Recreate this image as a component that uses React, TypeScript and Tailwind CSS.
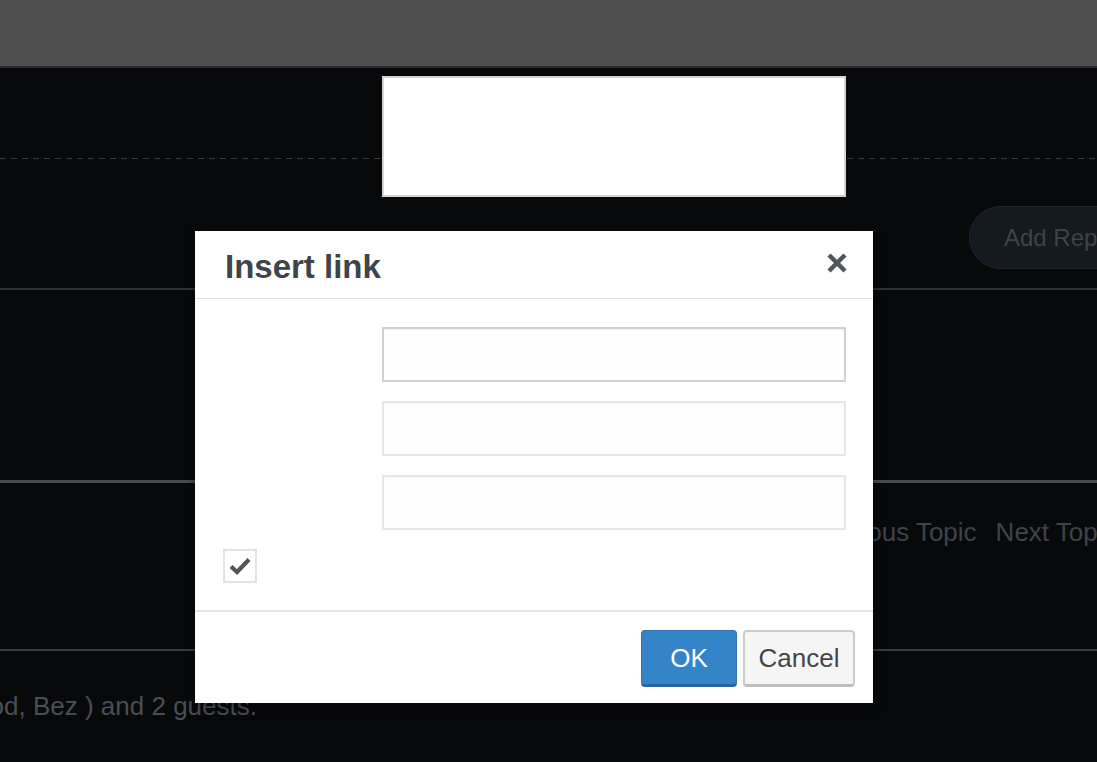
import React from 'react';

const FONT = { fontFamily: '"Liberation Sans", Arial, Helvetica, sans-serif' };

function CloseIcon() {
  return (
    <svg width="22" height="22" viewBox="0 0 22 22" className="block">
      <path d="M3 3 L19 19 M19 3 L3 19" stroke="#50565c" strokeWidth="4.5" strokeLinecap="butt" />
    </svg>
  );
}

function CheckIcon() {
  return (
    <svg width="22" height="18" viewBox="0 0 22 18" className="block">
      <path d="M2 9.5 L8 15 L20 2.5" fill="none" stroke="#555" strokeWidth="4.2" strokeLinejoin="miter" />
    </svg>
  );
}

function LinkDialog() {
  return (
    <div className="absolute left-[195px] top-[231px] w-[678px] h-[472px] bg-white flex flex-col shadow-[0_3px_12px_rgba(0,0,0,0.4)]">
      <div className="h-[68px] border-b border-[#e3e3e3] flex items-center justify-between pl-[30px] pr-[25px]">
        <h2 className="text-[33px] font-bold text-[#3e444a] leading-none pt-[3px]">Insert link</h2>
        <button type="button" className="p-0 pb-[3px]">
          <CloseIcon />
        </button>
      </div>

      <div className="flex-1 pl-[28px] pr-[27px] pt-[28px] flex flex-col">
        <div className="flex flex-col gap-[19px] pl-[159px]">
          <input
            type="text"
            className="h-[55px] w-full border-2 border-[#d0d0d0] bg-[#fefefe] outline-none shadow-[inset_0_1px_2px_rgba(0,0,0,0.06)]"
          />
          <input
            type="text"
            className="h-[55px] w-full border-2 border-[#e6e6e6] bg-[#fefefe] outline-none shadow-[inset_0_1px_2px_rgba(0,0,0,0.04)]"
          />
          <input
            type="text"
            className="h-[55px] w-full border-2 border-[#e6e6e6] bg-[#fefefe] outline-none shadow-[inset_0_1px_2px_rgba(0,0,0,0.04)]"
          />
        </div>
        <div className="mt-[19px] w-[34px] h-[34px] border-2 border-[#e2e2e2] flex items-center justify-center">
          <CheckIcon />
        </div>
      </div>

      <div className="h-[93px] border-t-2 border-[#e5e5e5] flex justify-end items-start gap-[6px] pt-[18px] pr-[18px]">
        <button
          type="button"
          className="h-[57px] w-[96px] rounded-[4px] bg-[#3684c8] border border-[#2e73b3] border-b-[3px] border-b-[#2a65a0] text-white text-[26px] leading-none"
        >
          OK
        </button>
        <button
          type="button"
          className="h-[57px] w-[112px] rounded-[4px] bg-[#f5f5f5] border-2 border-[#cccccc] border-b-[3px] border-b-[#bdbdbd] text-[#454545] text-[26px] leading-none"
        >
          Cancel
        </button>
      </div>
    </div>
  );
}

export default function App() {
  return (
    <div className="relative h-[762px] w-full overflow-hidden bg-[#08090b]" style={FONT}>
      <div className="h-[68px] bg-[#4f4f4f] border-b-2 border-[#2a2b2f]" />

      <div className="h-[90px]" />
      <div className="h-px bg-[repeating-linear-gradient(90deg,#3a3b3d_0_6px,transparent_6px_11px)]" />

      <div className="h-[129px] pt-[47px] whitespace-nowrap">
        <div className="ml-[969px] inline-flex h-[63px] items-center rounded-full bg-[#141a20] border border-[#1e252c] pl-[34px] pr-[40px] text-[24px] text-[#3d444b]">
          Add Reply
        </div>
      </div>

      <div className="h-[2px] bg-[#2f3033]" />
      <div className="h-[190px]" />
      <div className="h-[3px] bg-[#4b4c4e]" />

      <div className="h-[166px] pt-[34px] whitespace-nowrap">
        <div className="ml-[808px] flex gap-[19px] text-[26px] leading-[30px] text-[#3d444b]">
          <span>Previous Topic</span>
          <span>Next Topic</span>
        </div>
      </div>

      <div className="h-[2px] bg-[#3a3b3d]" />

      <div className="pt-[40px] w-[257px] flex justify-end overflow-hidden whitespace-nowrap">
        <span className="text-[26px] leading-[30px] text-[#4a4f55]">
          Users browsing this forum: ( Bod, Bez ) and 2 guests.
        </span>
      </div>

      <div className="absolute left-[382px] top-[76px] w-[464px] h-[121px] bg-white border-2 border-[#d4d4d4]" />

      <LinkDialog />
    </div>
  );
}
